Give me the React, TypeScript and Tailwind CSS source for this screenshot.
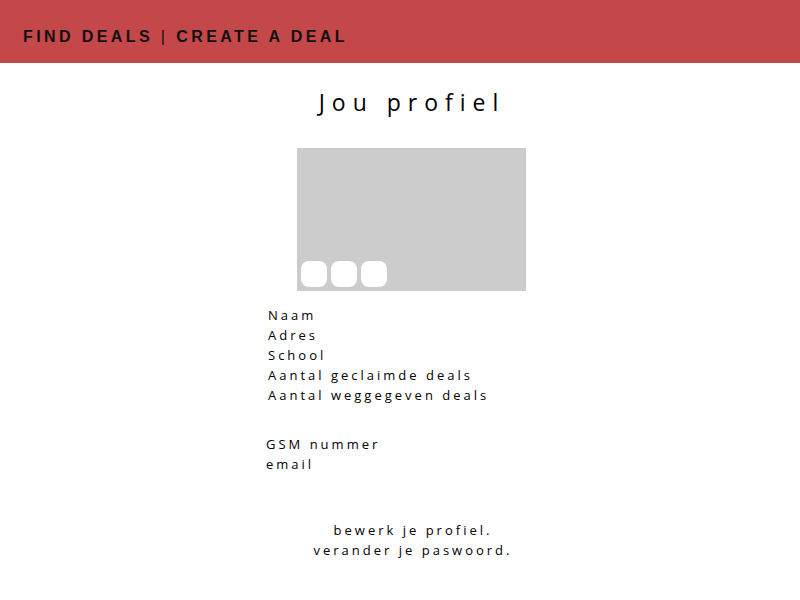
export default function App() {
  const details = ['Naam', 'Adres', 'School', 'Aantal geclaimde deals', 'Aantal weggegeven deals'];

  return (
    <div className="min-h-[600px] w-[800px] bg-white font-['Open_Sans',sans-serif] text-black">
      <header className="flex h-[63px] items-center bg-[#c4474a] pl-[23px] pt-[10px]">
        <nav className="font-['Liberation_Sans',sans-serif] text-[16px] font-bold tracking-[3.4px] text-[#111]">
          FIND DEALS <span className="font-normal">|</span> CREATE A DEAL
        </nav>
      </header>

      <main className="flex flex-col items-center">
        <h1 className="mt-[22px] pl-[24px] text-[23px] font-normal leading-[34px] tracking-[7px]">Jou profiel</h1>

        <div className="mt-[29px] ml-[22px] flex h-[143px] w-[229px] items-end gap-[4px] bg-[#cccccc] p-[4px]">
          <div className="h-[26px] w-[26px] rounded-[8px] bg-white" />
          <div className="h-[26px] w-[26px] rounded-[8px] bg-white" />
          <div className="h-[26px] w-[26px] rounded-[8px] bg-white" />
        </div>

        <div className="mt-[14px] w-[264px] text-[13px] leading-[20px] tracking-[3px]">
          {details.map((d) => (
            <div key={d}>{d}</div>
          ))}
        </div>

        <div className="mt-[29px] -ml-[0px] w-[268px] text-[13px] leading-[20px] tracking-[3px]">
          <div>GSM nummer</div>
          <div>email</div>
        </div>

        <div className="mt-[46px] ml-[26px] text-center text-[13px] leading-[20px] tracking-[3px]">
          <div>bewerk je profiel.</div>
          <div>verander je paswoord.</div>
        </div>
      </main>
    </div>
  );
}
